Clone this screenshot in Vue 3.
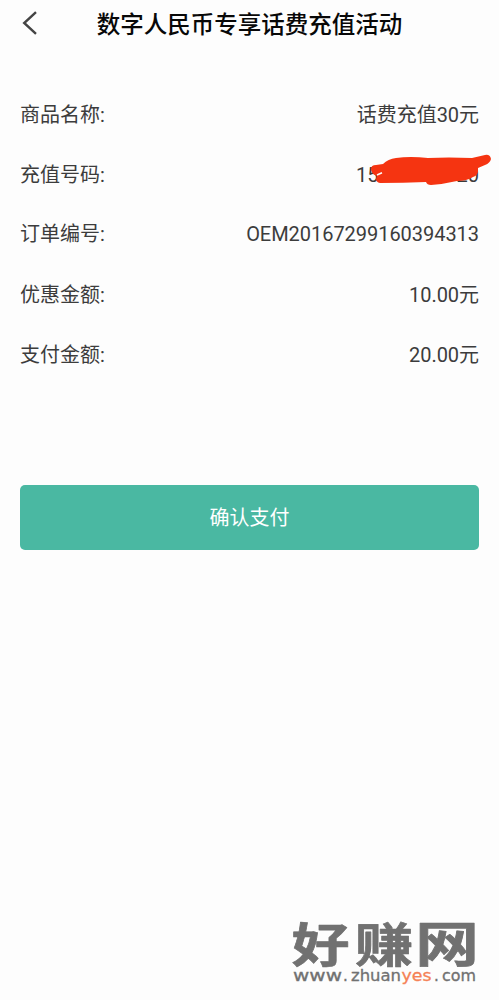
<script setup>
const rows = [
  { label: '商品名称:', value: '话费充值30元' },
  { label: '充值号码:', value: '15', tail: '20', hidden: true },
  { label: '订单编号:', value: 'OEM20167299160394313' },
  { label: '优惠金额:', value: '10.00元' },
  { label: '支付金额:', value: '20.00元' },
]
</script>

<template>
  <main class="page">
    <header class="header">
      <svg class="back" width="16" height="24" viewBox="0 0 16 24">
        <path d="M14 1.2 L2.2 12 L14 22.8" />
      </svg>
      <h1 class="title">数字人民币专享话费充值活动</h1>
    </header>

    <section class="details">
      <div v-for="row in rows" :key="row.label" class="row">
        <span class="label">{{ row.label }}</span>
        <span v-if="row.hidden" class="value masked">
          <span>{{ row.value }}</span><span>{{ row.tail }}</span>
          <svg class="scribble" width="124" height="34" viewBox="0 0 124 34">
            <path d="M3 15 Q3 11 8 11 L15 10 Q20 5 28 4 Q42 2 60 4 Q80 3 104 4 L117 1 Q122 0 123 5 Q122 9 117 11 L110 14 L110 18 Q109 22 105 23 Q99 27 89 27 Q76 30 63 31 Q59 31 58 28 Q35 29 12 29 Q8 28 8 25 L9 22 Q3 20 3 15Z" />
            <path class="gap" d="M9 21 L14 18.8" />
          </svg>
        </span>
        <span v-else class="value">{{ row.value }}</span>
      </div>
    </section>

    <button class="pay">确认支付</button>

    <footer class="brand">
      <svg width="190" height="100" viewBox="0 0 190 100">
        <g class="name">
          <text transform="translate(1.8 61.5) scale(1.18 0.96)">好</text>
          <text transform="translate(65 61.5) scale(1.19 0.96)">赚</text>
          <text transform="translate(125.3 61.5) scale(1.3 0.99)">网</text>
        </g>
        <g class="site">
          <text x="3" y="81" textLength="49" lengthAdjust="spacingAndGlyphs">www</text>
          <text x="53" y="81">.</text>
          <text x="61" y="81" textLength="50" lengthAdjust="spacingAndGlyphs">zhuan</text>
          <text class="accent" x="111.5" y="81" textLength="30" lengthAdjust="spacingAndGlyphs">yes</text>
          <text x="144" y="81">.</text>
          <text x="152" y="81" textLength="34" lengthAdjust="spacingAndGlyphs">com</text>
        </g>
      </svg>
    </footer>
  </main>
</template>

<style>
body {
  background: #fdfdfd;
}
</style>

<style scoped>
.page {
  display: flex;
  flex-direction: column;
  box-sizing: border-box;
  width: 499px;
  height: 1000px;
  overflow: hidden;
  background: #fdfdfd;
  color: #3c3c3c;
  font-family: Roboto, "Noto Sans CJK SC", sans-serif;
}
.header {
  display: grid;
  grid-template-columns: 77px 1fr 77px;
  align-items: center;
  height: 48px;
}
.back {
  margin: -2px 0 0 22px;
  fill: none;
  stroke: #444;
  stroke-width: 2.4;
}
.title {
  margin: 2px 0 0;
  color: #080808;
  font-size: 23.5px;
  font-weight: 500;
  line-height: 46px;
  text-align: center;
  white-space: nowrap;
}
.details {
  display: grid;
  grid-template-rows: 60px 59px 61px 60px 60px;
  padding: 37px 20px 0;
}
.row {
  display: flex;
  justify-content: space-between;
  font-size: 20px;
  font-weight: 400;
  line-height: 60px;
  white-space: nowrap;
}
.value {
  letter-spacing: -0.04px;
}
.masked {
  position: relative;
  display: flex;
  justify-content: space-between;
  width: 123px;
}
.scribble {
  position: absolute;
  top: 9px;
  left: 12px;
  fill: #f53411;
}
.gap {
  fill: none;
  stroke: #fdfdfd;
  stroke-width: 1.5;
}
.pay {
  height: 65px;
  margin: 100px 20px 0;
  padding: 0 0 2px;
  border: 0;
  border-radius: 5px;
  background: #4ab8a2;
  color: #fff;
  font: 20px Roboto, "Noto Sans CJK SC", sans-serif;
}
.brand {
  display: flex;
  justify-content: flex-end;
  margin-top: auto;
  padding-right: 19px;
}
.brand svg {
  display: block;
}
.name {
  fill: #717171;
  stroke: #717171;
  stroke-width: 0.7;
  stroke-linejoin: round;
  font: 700 49px "Noto Sans CJK SC", sans-serif;
}
.site {
  fill: #717171;
  stroke: #717171;
  stroke-width: 0.3;
  font: 15px "DejaVu Sans", sans-serif;
}
.accent {
  fill: #f58256;
  stroke: #f58256;
}
</style>
